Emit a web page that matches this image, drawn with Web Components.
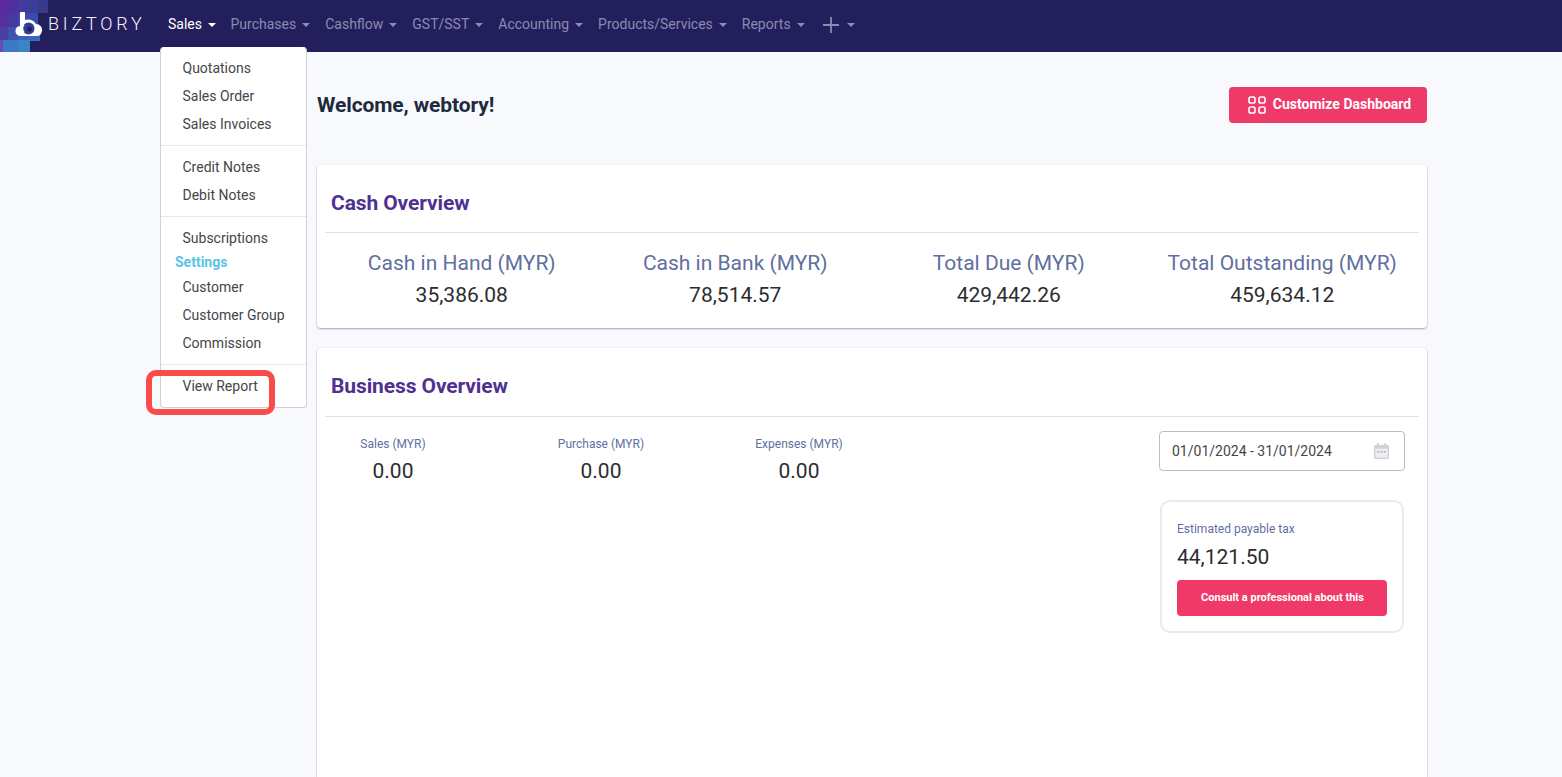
<!DOCTYPE html>
<html>
<head>
<meta charset="utf-8">
<title>Biztory</title>
<style>
  html, body { margin: 0; height: 100%; overflow: hidden; background: #f8f9fd; font-family: Roboto, "Liberation Sans", sans-serif; }
</style>
</head>
<body>

<biz-navbar>
  <nav-item active>Sales
    <sales-menu slot="menu"></sales-menu>
  </nav-item>
  <nav-item>Purchases</nav-item>
  <nav-item>Cashflow</nav-item>
  <nav-item>GST/SST</nav-item>
  <nav-item>Accounting</nav-item>
  <nav-item>Products/Services</nav-item>
  <nav-item>Reports</nav-item>
  <nav-item plus></nav-item>
</biz-navbar>

<dash-page>
  <dash-card title="Cash Overview">
    <div style="display:grid;grid-template-columns:repeat(4,1fr)">
      <stat-block label="Cash in Hand (MYR)" value="35,386.08"></stat-block>
      <stat-block label="Cash in Bank (MYR)" value="78,514.57"></stat-block>
      <stat-block label="Total Due (MYR)" value="429,442.26"></stat-block>
      <stat-block label="Total Outstanding (MYR)" value="459,634.12"></stat-block>
    </div>
  </dash-card>
  <dash-card title="Business Overview" tall>
    <business-body></business-body>
  </dash-card>
</dash-page>

<script>
class BizNavbar extends HTMLElement {
  constructor() {
    super();
    const shadow = this.attachShadow({ mode: "open" });
    shadow.innerHTML = `
      <style>
        :host { display: flex; height: 52px; background: #231f5c; position: relative; z-index: 10; color: #fff; }
        .mosaic { position: absolute; left: 0; top: 0; }
        .brand { position: relative; display: flex; align-items: center; width: 168px; flex: none; }
        .brand svg.mark { margin-left: 15px; flex: none; }
        .word { font-size: 18px; font-weight: 300; letter-spacing: 3.800px; margin-left: 5px; color: #f4f4f8; position: relative; top: -2.500px; }
        .items { display: flex; align-items: center; position: relative; top: -2px; }
        ::slotted(nav-item:first-child) { margin-right: 14.500px; }
      </style>
      <div class="brand">
        <svg class="mosaic" width="50" height="52" viewBox="0 0 50 52">
          <rect x="0" y="0" width="8" height="13" fill="#5b2a9c"/>
          <rect x="8" y="0" width="10" height="13" fill="#4d2f9e"/>
          <rect x="18" y="0" width="10" height="13" fill="#433a9e"/>
          <rect x="28" y="0" width="10" height="13" fill="#3a3f9c"/>
          <rect x="38" y="0" width="10" height="13" fill="#383a8c"/>
          <rect x="0" y="13" width="8" height="14" fill="#53309e"/>
          <rect x="8" y="13" width="10" height="14" fill="#463a9f"/>
          <rect x="18" y="13" width="10" height="14" fill="#3e49a8"/>
          <rect x="28" y="13" width="10" height="14" fill="#3a4cab"/>
          <rect x="0" y="27" width="8" height="13" fill="#4a3fa6"/>
          <rect x="8" y="27" width="10" height="13" fill="#3e55b0"/>
          <rect x="18" y="27" width="10" height="13" fill="#3a62b6"/>
          <rect x="28" y="27" width="12" height="13" fill="#3a66b8"/>
          <rect x="0" y="40" width="3" height="12" fill="#6a4ab0"/>
          <rect x="3" y="40" width="15" height="12" fill="#3a79c4"/>
          <rect x="18" y="40" width="12" height="12" fill="#3a84ca"/>
          <rect x="30" y="40" width="10" height="1" fill="#3a70bc"/>
        </svg>
        <svg class="mark" style="position:relative;top:-1px" width="28" height="27" viewBox="0 0 28 27">
          <path fill="#fff" d="M5 1.500a2.500 2.500 0 0 1 5 0V8a9 9 0 0 1 11 4a6 6 0 0 1 6 7c-.4 3-2.400 5-5 5H6c-3 0-5.500-1.500-5.500-5a5 5 0 0 1 4.500-5z"/>
          <circle cx="13.500" cy="16.500" r="6" fill="#2e3f95"/>
          <circle cx="14.500" cy="17" r="2.500" fill="#231f5c"/>
          <path fill="none" stroke="#fff" stroke-width="1.500" d="M9 12.500a6.500 6.500 0 0 0 0 8"/>
        </svg>
        <span class="word">BIZTORY</span>
      </div>
      <div class="items"><slot></slot></div>
    `;
  }
}
customElements.define("biz-navbar", BizNavbar);

class NavItem extends HTMLElement {
  constructor() {
    super();
    const shadow = this.attachShadow({ mode: "open" });
    shadow.innerHTML = `
      <style>
        :host { display: flex; align-items: center; position: relative; font-size: 14px; color: #8a8cb0; margin-right: 15px; white-space: nowrap; }
        :host([active]) { color: #fff; }
        .caret { width: 0; height: 0; border-left: 4px solid transparent; border-right: 4px solid transparent; border-top: 4px solid currentColor; margin-left: 6px; margin-top: 2px; }
        svg { display: none; margin: 2px 2px 0 3.500px; }
        :host([plus]) svg { display: block; }
      </style>
      <svg width="16" height="16" viewBox="0 0 16 16"><path d="M8 0v16M0 8h16" stroke="currentColor" stroke-width="1.800"/></svg>
      <slot></slot>
      <span class="caret"></span>
      <slot name="menu"></slot>
    `;
  }
}
customElements.define("nav-item", NavItem);

class SalesMenu extends HTMLElement {
  constructor() {
    super();
    const shadow = this.attachShadow({ mode: "open" });
    shadow.innerHTML = `
      <style>
        :host { display: block; position: absolute; left: -8px; top: 31px; width: 147px; box-sizing: border-box; background: #fff; border: 1px solid #cfd1d6; border-top-color: #fff; border-radius: 4px; padding: 6px 0 7px; color: #444649; font-size: 14px; }
        a { display: block; height: 28px; line-height: 28px; padding-left: 21.500px; }
        hr { border: 0; border-top: 1px solid #e6e8ee; margin: 7px 0; }
        .head { height: 21px; line-height: 21px; padding-left: 14px; color: #5bc4e6; font-weight: 700; }
        .note { position: absolute; left: -15px; top: 322px; width: 129px; height: 45px; box-sizing: border-box; border: 6px solid #f94c4a; border-radius: 10px; }
      </style>
      <a>Quotations</a>
      <a>Sales Order</a>
      <a>Sales Invoices</a>
      <hr>
      <a>Credit Notes</a>
      <a>Debit Notes</a>
      <hr>
      <a>Subscriptions</a>
      <div class="head">Settings</div>
      <a>Customer</a>
      <a>Customer Group</a>
      <a>Commission</a>
      <hr>
      <a>View Report</a>
      <div class="note"></div>
    `;
  }
}
customElements.define("sales-menu", SalesMenu);

class DashPage extends HTMLElement {
  constructor() {
    super();
    const shadow = this.attachShadow({ mode: "open" });
    shadow.innerHTML = `
      <style>
        :host { display: block; width: 1110px; margin-left: 317px; }
        .top { display: flex; justify-content: space-between; align-items: center; padding-top: 35px; height: 36px; margin-bottom: 42px; }
        h1 { margin: 0; font-size: 21px; font-weight: 700; color: #1e2a3e; letter-spacing: -0.1px; }
        .cards { display: flex; flex-direction: column; gap: 20px; }
      </style>
      <div class="top">
        <h1>Welcome, webtory!</h1>
        <pink-button icon>Customize Dashboard</pink-button>
      </div>
      <div class="cards"><slot></slot></div>
    `;
  }
}
customElements.define("dash-page", DashPage);

class PinkButton extends HTMLElement {
  constructor() {
    super();
    const shadow = this.attachShadow({ mode: "open" });
    shadow.innerHTML = `
      <style>
        :host { display: flex; align-items: center; justify-content: center; box-sizing: border-box; width: 198px; height: 36px; padding: 0 0 2px 1px; background: #ef3a69; color: #fff; border-radius: 4px; font-size: 14px; font-weight: 700; white-space: nowrap; }
        :host([icon]) { padding-left: 3px; }
        :host([small]) { width: 100%; font-size: 11px; }
        svg { display: none; margin: 2px 7px 0 0; }
        :host([icon]) svg { display: block; }
      </style>
      <svg width="18" height="18" viewBox="0 0 18 18" fill="none" stroke="#fff" stroke-width="1.600">
        <rect x="1" y="1" width="6" height="6" rx="1.800"/><rect x="11" y="1" width="6" height="6" rx="1.800"/>
        <rect x="1" y="11" width="6" height="6" rx="1.800"/><rect x="11" y="11" width="6" height="6" rx="1.800"/>
      </svg>
      <slot></slot>
    `;
  }
}
customElements.define("pink-button", PinkButton);

class DashCard extends HTMLElement {
  constructor() {
    super();
    const shadow = this.attachShadow({ mode: "open" });
    shadow.innerHTML = `
      <style>
        :host { display: block; box-sizing: border-box; background: #fff; border-radius: 4px; padding: 0 8px; box-shadow: 0 1px 2px rgba(60, 64, 90, 0.45), 0 0 2px rgba(60, 64, 90, 0.06); }
        :host([tall]) { height: 429px; border-radius: 4px 4px 0 0; }
        h2 { margin: 0; height: 68px; line-height: 76px; padding-left: 6px; font-size: 21px; font-weight: 700; color: #50318f; border-bottom: 1px solid #dfe1e6; box-sizing: border-box; letter-spacing: -0.1px; }
        :host([tall]) h2 { height: 69px; }
      </style>
      <h2></h2>
      <slot></slot>
    `;
    shadow.querySelector("h2").textContent = this.getAttribute("title");
  }
}
customElements.define("dash-card", DashCard);

class StatBlock extends HTMLElement {
  constructor() {
    super();
    const shadow = this.attachShadow({ mode: "open" });
    shadow.innerHTML = `
      <style>
        :host { display: block; text-align: center; padding: 15px 0 16px; }
        div { font-size: 21px; line-height: 30px; }
        .l { color: #5f6f9f; }
        .v { color: #2b2d30; line-height: 34px; }
      </style>
      <div class="l"></div>
      <div class="v"></div>
    `;
    shadow.querySelector(".l").textContent = this.getAttribute("label");
    shadow.querySelector(".v").textContent = this.getAttribute("value");
  }
}
customElements.define("stat-block", StatBlock);

class SmallStat extends HTMLElement {
  constructor() {
    super();
    const shadow = this.attachShadow({ mode: "open" });
    shadow.innerHTML = `
      <style>
        :host { display: block; text-align: center; }
        .l { font-size: 12px; line-height: 16px; color: #5f6f9f; }
        .v { font-size: 21px; line-height: 28px; margin-top: 5px; color: #2b2d30; }
      </style>
      <div class="l"></div>
      <div class="v"></div>
    `;
    shadow.querySelector(".l").textContent = this.getAttribute("label");
    shadow.querySelector(".v").textContent = this.getAttribute("value");
  }
}
customElements.define("small-stat", SmallStat);

class DateField extends HTMLElement {
  constructor() {
    super();
    const shadow = this.attachShadow({ mode: "open" });
    shadow.innerHTML = `
      <style>
        :host { display: flex; align-items: center; justify-content: space-between; box-sizing: border-box; width: 246px; height: 40px; padding: 0 15px 0 12px; border: 1px solid #bcbec2; border-radius: 4px; background: #fff; font-size: 14px; color: #444649; }
      </style>
      <span>01/01/2024 - 31/01/2024</span>
      <svg width="15" height="16" viewBox="0 0 16 17">
        <path fill="#cdd2d9" d="M3 0h2v2h6V0h2v2h1.500A1.500 1.500 0 0 1 16 3.500v12a1.500 1.500 0 0 1-1.500 1.500h-13A1.500 1.500 0 0 1 0 15.500v-12A1.500 1.500 0 0 1 1.500 2H3z"/>
        <path fill="#eceef1" d="M1.500 6h13v9.500h-13z"/>
        <path fill="#aeb4bd" d="M3.500 8.500h2v1.500h-2zM7 8.500h2v1.500H7zM10.500 8.500h2v1.500h-2z"/>
      </svg>
    `;
  }
}
customElements.define("date-field", DateField);

class TaxBox extends HTMLElement {
  constructor() {
    super();
    const shadow = this.attachShadow({ mode: "open" });
    shadow.innerHTML = `
      <style>
        :host { display: block; box-sizing: border-box; width: 244px; height: 133px; padding: 19px 15px 0; border: 2px solid #e6eaf5; border-radius: 10px; background: #fff; }
        .l { font-size: 12px; line-height: 16px; color: #5f6f9f; }
        .v { font-size: 21px; line-height: 28px; margin: 6px 0 9px; color: #2b2d30; }
      </style>
      <div class="l">Estimated payable tax</div>
      <div class="v">44,121.50</div>
      <pink-button small>Consult a professional about this</pink-button>
    `;
  }
}
customElements.define("tax-box", TaxBox);

class BusinessBody extends HTMLElement {
  constructor() {
    super();
    const shadow = this.attachShadow({ mode: "open" });
    shadow.innerHTML = `
      <style>
        :host { display: flex; justify-content: space-between; padding: 14px 14px 0 0; }
        .stats { display: grid; grid-template-columns: 136px 280px 116px; align-items: start; padding-top: 5px; }
        .side { display: flex; flex-direction: column; align-items: center; gap: 29px; }
      </style>
      <div class="stats">
        <small-stat label="Sales (MYR)" value="0.00"></small-stat>
        <small-stat label="Purchase (MYR)" value="0.00"></small-stat>
        <small-stat label="Expenses (MYR)" value="0.00"></small-stat>
      </div>
      <div class="side">
        <date-field></date-field>
        <tax-box></tax-box>
      </div>
    `;
  }
}
customElements.define("business-body", BusinessBody);
</script>
</body>
</html>
